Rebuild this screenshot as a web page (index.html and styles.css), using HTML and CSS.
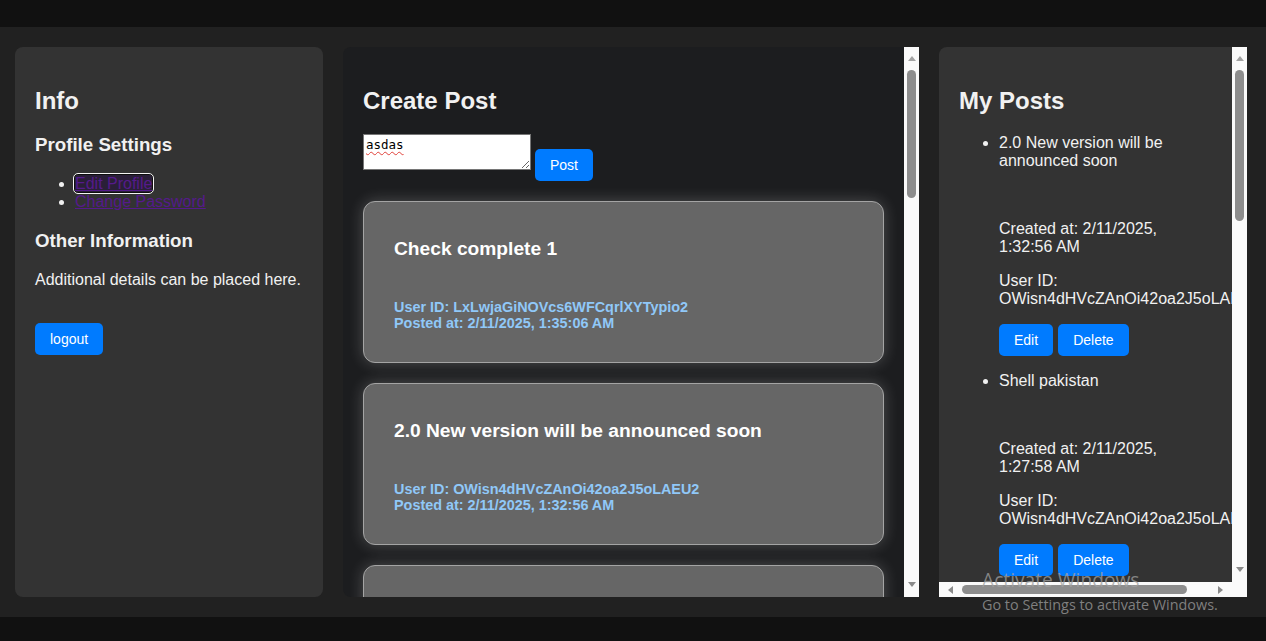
FILE: index.html
```html
<!DOCTYPE html>
<html lang="en">
<head>
<meta charset="utf-8">
<title>Dashboard</title>
<link rel="stylesheet" href="styles.css">
</head>
<body>
<div class="topbar"></div>
<main class="layout">
  <aside class="panel info">
    <h2>Info</h2>
    <h3>Profile Settings</h3>
    <ul class="links">
      <li><a class="link focused" href="#">Edit Profile</a></li>
      <li><a class="link" href="#">Change Password</a></li>
    </ul>
    <h3 class="other-title">Other Information</h3>
    <p>Additional details can be placed here.</p>
    <div class="logout-wrap"><button class="btn">logout</button></div>
  </aside>

  <section class="panel feed">
    <div class="feed-scroll">
      <h2>Create Post</h2>
      <div class="composer">
        <textarea class="composer-input" spellcheck="false">asdas</textarea>
        <button class="btn post-btn">Post</button>
      </div>
      <div class="cards">
        <article class="card">
          <h3 class="card-title">Check complete 1</h3>
          <p class="card-meta">User ID: LxLwjaGiNOVcs6WFCqrlXYTypio2<br>Posted at: 2/11/2025, 1:35:06 AM</p>
        </article>
        <article class="card">
          <h3 class="card-title">2.0 New version will be announced soon</h3>
          <p class="card-meta">User ID: OWisn4dHVcZAnOi42oa2J5oLAEU2<br>Posted at: 2/11/2025, 1:32:56 AM</p>
        </article>
        <article class="card">
          <h3 class="card-title">Shell pakistan</h3>
          <p class="card-meta">User ID: OWisn4dHVcZAnOi42oa2J5oLAEU2<br>Posted at: 2/11/2025, 1:27:58 AM</p>
        </article>
      </div>
    </div>
    <div class="vscroll">
      <div class="arrow-box up"><span class="tri tri-up"></span></div>
      <div class="thumb thumb-feed"></div>
      <div class="spacer"></div>
      <div class="arrow-box down"><span class="tri tri-down"></span></div>
    </div>
  </section>

  <aside class="panel myposts">
    <div class="mp-scroll">
      <h2>My Posts</h2>
      <ul class="mp-list">
        <li class="mp-item">
          <div class="mp-title">2.0 New version will be announced soon</div>
          <p class="mp-created">Created at: 2/11/2025, 1:32:56 AM</p>
          <p class="mp-uid">User ID: OWisn4dHVcZAnOi42oa2J5oLAEU2</p>
          <div class="mp-actions"><button class="btn">Edit</button><button class="btn">Delete</button></div>
        </li>
        <li class="mp-item">
          <div class="mp-title">Shell pakistan</div>
          <p class="mp-created">Created at: 2/11/2025, 1:27:58 AM</p>
          <p class="mp-uid">User ID: OWisn4dHVcZAnOi42oa2J5oLAEU2</p>
          <div class="mp-actions"><button class="btn">Edit</button><button class="btn">Delete</button></div>
        </li>
        <li class="mp-item">
          <div class="mp-title">Check complete 1</div>
          <p class="mp-created">Created at: 2/11/2025, 1:35:06 AM</p>
        </li>
      </ul>
    </div>
    <div class="vscroll mp-v">
      <div class="arrow-box up"><span class="tri tri-up"></span></div>
      <div class="thumb thumb-mp"></div>
      <div class="spacer"></div>
      <div class="arrow-box down"><span class="tri tri-down"></span></div>
    </div>
    <div class="hscroll">
      <div class="harrow"><span class="tri tri-left"></span></div>
      <div class="hthumb"></div>
      <div class="spacer"></div>
      <div class="harrow"><span class="tri tri-right"></span></div>
    </div>
    <div class="corner"></div>
  </aside>
</main>
<div class="bottombar"></div>

<div class="watermark">
  <div class="wm-title">Activate Windows</div>
  <div class="wm-sub">Go to Settings to activate Windows.</div>
</div>
</body>
</html>
```

FILE: styles.css
```css
* { box-sizing: border-box; }

html, body {
  margin: 0;
  padding: 0;
}

body {
  background: #111111;
  font-family: "Liberation Sans", Arial, sans-serif;
  font-size: 16px;
  color: #f1f1f1;
  width: 1266px;
  height: 641px;
  overflow: hidden;
}

.topbar {
  height: 27px;
  background: #111111;
}

.layout {
  height: 590px;
  background: #212121;
  padding: 20px 15px;
  display: grid;
  grid-template-columns: 308px 576px 308px;
  column-gap: 20px;
}

.bottombar {
  height: 24px;
  background: #111111;
}

.panel {
  height: 550px;
  overflow: hidden;
}

h2 {
  font-size: 24px;
  font-weight: bold;
  margin: 19.92px 0 18.9px;
  color: #f1f1f1;
}

h3 {
  font-size: 18.72px;
  font-weight: bold;
  margin: 18.72px 0;
  color: #f1f1f1;
}

p { margin: 16px 0; }

/* ---------- Info panel ---------- */
.info {
  background: #333333;
  border-radius: 8px;
  padding: 20px;
}

.links {
  margin: 16px 0 17.5px;
  padding-left: 40px;
}

.other-title {
  margin-top: 19.7px;
}

.link {
  color: #551a8b;
  text-decoration: underline;
}

.focused {
  border-radius: 3px;
  background: #2a1f38;
  box-shadow: 0 0 0 1px #0e0e0e;
  outline: 1px solid #f4f4f4;
  outline-offset: 1px;
}

.logout-wrap {
  margin-top: 34px;
}

.btn {
  font-family: "Liberation Sans", Arial, sans-serif;
  font-size: 14px;
  line-height: 16px;
  color: #ffffff;
  background: #007bff;
  border: none;
  border-radius: 5px;
  padding: 8px 15px;
  cursor: pointer;
}

/* ---------- Feed panel ---------- */
.feed {
  display: grid;
  grid-template-columns: 1fr 15px;
  border-radius: 8px 0 0 8px;
  background: #1c1d1f;
}

.feed-scroll {
  overflow: hidden;
  padding: 20px 20px 0 20px;
}

.composer {
  display: flex;
  align-items: flex-start;
  gap: 4px;
}

.composer-input {
  width: 168px;
  height: 36px;
  margin: 0;
  padding: 2px;
  border: 1px solid #767676;
  background: #ffffff;
  color: #000000;
  font-family: "DejaVu Sans Mono", "Liberation Mono", monospace;
  font-size: 12.5px;
  line-height: 15px;
  text-decoration: underline wavy #e0413a;
  text-decoration-thickness: 1px;
  text-underline-offset: 2px;
  resize: both;
}

.post-btn {
  margin-top: 15px;
}

.cards {
  margin-top: 20px;
  display: flex;
  flex-direction: column;
  gap: 20px;
}

.card {
  background: #666666;
  border: 1px solid #a4a4a4;
  border-radius: 12px;
  padding: 30px;
  box-shadow: 0 0 15px rgba(255, 255, 255, 0.22);
  flex-shrink: 0;
}

.card-title {
  font-size: 19.2px;
  line-height: 23px;
  margin: 5px 0 0;
  color: #ffffff;
}

.card-meta {
  font-size: 14.4px;
  font-weight: bold;
  line-height: 16.5px;
  color: #90c8f8;
  margin: 39px 0 0;
}

/* ---------- Scrollbars ---------- */
.vscroll {
  background: #fafafa;
  display: flex;
  flex-direction: column;
  align-items: center;
}

.arrow-box {
  width: 15px;
  display: flex;
  align-items: center;
  justify-content: center;
  flex-shrink: 0;
}

.arrow-box.up { height: 23px; }
.arrow-box.down { height: 26px; }

.tri {
  display: block;
  width: 0;
  height: 0;
}

.tri-up {
  border-left: 4.5px solid transparent;
  border-right: 4.5px solid transparent;
  border-bottom: 5px solid #a3a3a3;
}

.tri-down {
  border-left: 4.5px solid transparent;
  border-right: 4.5px solid transparent;
  border-top: 5px solid #8a8a8a;
}

.tri-left {
  border-top: 4.5px solid transparent;
  border-bottom: 4.5px solid transparent;
  border-right: 5px solid #8a8a8a;
}

.tri-right {
  border-top: 4.5px solid transparent;
  border-bottom: 4.5px solid transparent;
  border-left: 5px solid #8a8a8a;
}

.thumb {
  width: 9px;
  border-radius: 5px;
  background: #8d8d8d;
  flex-shrink: 0;
}

.thumb-feed { height: 128px; }
.thumb-mp { height: 151px; }

.spacer { flex: 1; }

/* ---------- My posts panel ---------- */
.myposts {
  display: grid;
  grid-template-columns: 293px 15px;
  grid-template-rows: 535px 15px;
  background: #333333;
  border-radius: 8px 0 0 0;
}

.mp-scroll {
  overflow: hidden;
  padding: 20px 20px 0 20px;
}

.mp-list {
  margin: 16px 0;
  padding-left: 40px;
}

.mp-item {
  margin-bottom: 16px;
}

.mp-title {
  line-height: 18.4px;
}

.mp-created {
  margin: 49.5px 0 16px;
}

.mp-uid {
  margin: 0 0 16px;
}

.mp-actions {
  display: flex;
  gap: 5px;
}

.hscroll {
  background: #fafafa;
  display: flex;
  align-items: center;
}

.harrow {
  width: 23px;
  height: 15px;
  display: flex;
  align-items: center;
  justify-content: center;
  flex-shrink: 0;
}

.hthumb {
  width: 225px;
  height: 9px;
  border-radius: 5px;
  background: #8d8d8d;
  flex-shrink: 0;
}

.corner {
  background: #fafafa;
}

/* ---------- OS watermark overlay ---------- */
.watermark {
  position: absolute;
  left: 982px;
  top: 569px;
  font-family: "Open Sans", "Noto Sans", sans-serif;
  color: rgba(160, 160, 160, 0.75);
  pointer-events: none;
}

.wm-title {
  font-size: 19.2px;
  line-height: 22px;
}

.wm-sub {
  font-size: 14.4px;
  line-height: 20px;
  margin-top: 4px;
}
```
